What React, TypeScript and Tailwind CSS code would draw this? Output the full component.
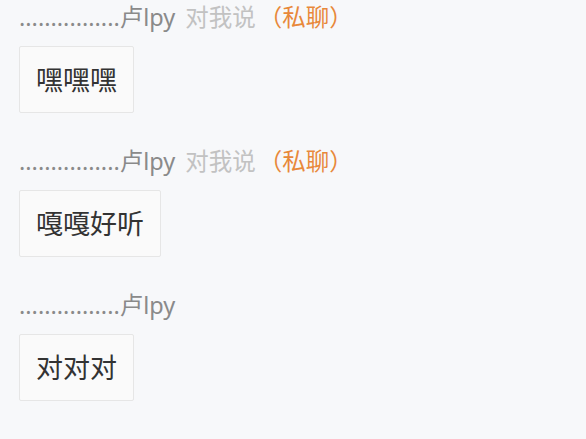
const messages = [
  { text: "嘿嘿嘿", toMe: true },
  { text: "嘎嘎好听", toMe: true },
  { text: "对对对", toMe: false },
];

const font = {
  fontFamily:
    '"Noto Sans", "Noto Sans CJK SC", sans-serif',
};

export default function App() {
  return (
    <div
      className="w-[586px] h-[439px] bg-[#f7f8fa] overflow-hidden px-[19px]"
      style={font}
    >
      {messages.map((m, i) => (
        <div key={i} className="flex flex-col items-start pb-[31px]">
          <div className="h-[36px] leading-[34px] text-[23.5px] whitespace-nowrap">
            <span className="text-[#8a8a8a]">................卢lpy</span>
            {m.toMe && (
              <>
                <span className="text-[#c2c2c2] ml-[10px]">对我说</span>
                <span className="text-[#e8883a] ml-[3px]">（私聊）</span>
              </>
            )}
          </div>
          <div className="mt-[10px] border border-[#e6e6e6] rounded-[2px] bg-[#fafafa] px-4 py-4 text-[27px] leading-[33px] text-[#333333]">
            {m.text}
          </div>
        </div>
      ))}
    </div>
  );
}
